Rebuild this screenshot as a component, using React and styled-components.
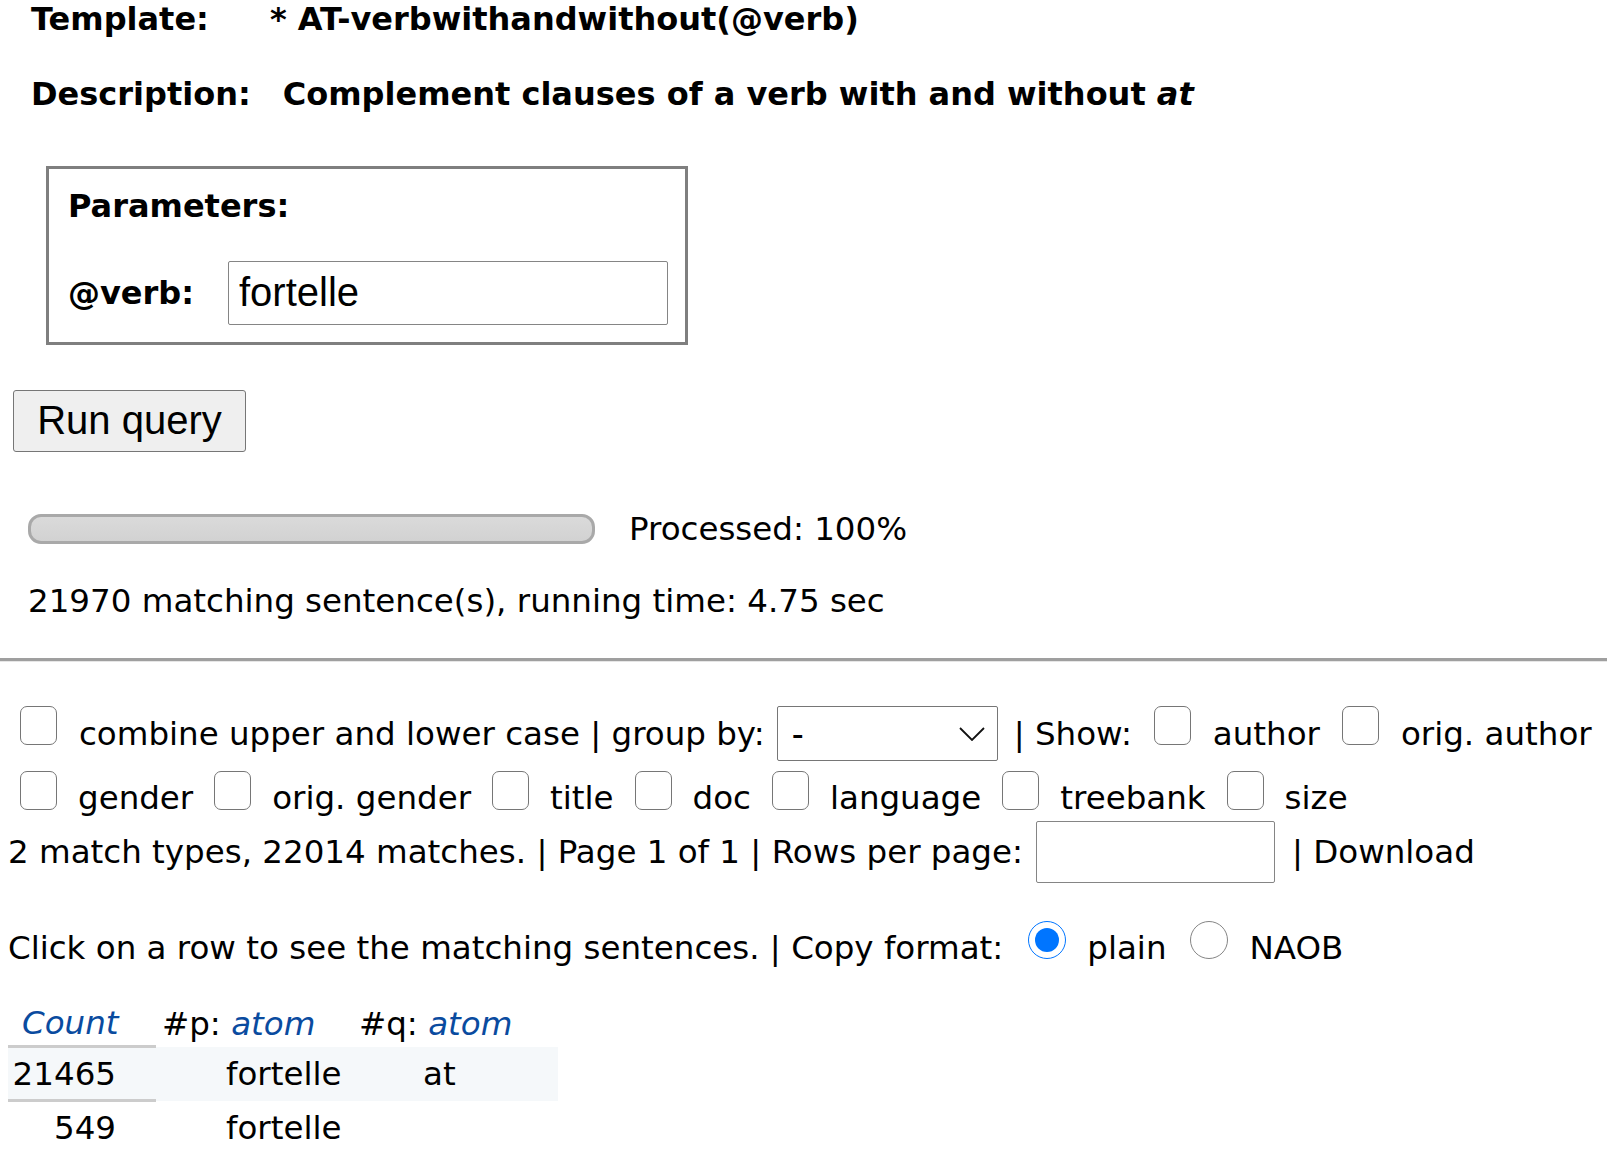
import React from 'react';
import styled, { createGlobalStyle } from 'styled-components';

const GlobalStyle = createGlobalStyle`
  body {
    margin: 0;
    background: #fff;
    color: #000;
    font-family: "DejaVu Sans", Verdana, sans-serif;
    font-size: 32.5px;
  }
`;

const Page = styled.div`
  padding-bottom: 20px;
`;

const InfoRow = styled.div`
  display: flex;
  align-items: center;
  height: 37px;
  padding-left: 31px;
  margin-top: ${props => props.top || 0}px;
  font-size: 32px;
  font-weight: bold;
  white-space: nowrap;
`;

const InfoLabel = styled.span`
  margin-right: ${props => props.gap}px;
`;

const ParamBox = styled.div`
  width: 642px;
  height: 179px;
  box-sizing: border-box;
  margin: 53px 0 0 46px;
  border: 3px solid #7f7f7f;
  padding: 19.5px 17px 0 19px;
`;

const BoxTitle = styled.div`
  height: 37px;
  line-height: 37px;
  font-size: 32px;
  font-weight: bold;
`;

const ParamRow = styled.div`
  display: flex;
  align-items: center;
  margin-top: 35.5px;
`;

const ParamLabel = styled.span`
  width: 160px;
  font-size: 32px;
  font-weight: bold;
`;

const TextInput = styled.input`
  width: ${props => props.w}px;
  height: ${props => props.h}px;
  box-sizing: border-box;
  border: 1px solid #858585;
  border-radius: 2px;
  padding: 0 10px;
  margin: 0;
  font-family: "Liberation Sans", Arial, sans-serif;
  font-size: 40px;
  color: #000;
  background: #fff;
  outline: none;
`;

const RunButton = styled.button`
  display: block;
  width: 233px;
  height: 62px;
  margin: 45px 0 0 13px;
  padding: 0;
  background: #efefef;
  border: 1px solid #767676;
  border-radius: 3px;
  font-family: "Liberation Sans", Arial, sans-serif;
  font-size: 40px;
  color: #000;
`;

const ProgressRow = styled.div`
  display: flex;
  align-items: center;
  gap: 34px;
  height: 37px;
  margin: 58.5px 0 0 28px;
`;

const ProgressBar = styled.div`
  width: 567px;
  height: 30px;
  box-sizing: border-box;
  border: 3px solid #a9a9a9;
  border-radius: 13px;
  background: linear-gradient(#dadada, #d2d2d2);
`;

const Status = styled.div`
  height: 37px;
  line-height: 37px;
  margin: 36px 0 0 28px;
`;

const Divider = styled.div`
  margin-top: 37.5px;
  height: 3px;
  background: #9f9f9f;
  border-bottom: 1px solid #e6e6e6;
`;

const Row = styled.div`
  display: flex;
  align-items: center;
  white-space: nowrap;
  height: ${props => props.h}px;
  margin-top: ${props => props.top}px;
  padding-left: ${props => props.left}px;
`;

const Text = styled.span`
  margin-right: ${props => (props.mr === undefined ? 22 : props.mr)}px;
`;

const Check = styled.span`
  flex: none;
  width: 37px;
  height: 39px;
  box-sizing: border-box;
  border: 1.5px solid #767676;
  border-radius: 7px;
  background: #fff;
  margin: 0 ${props => props.gap || 22}px ${props => props.lift * 2}px 0;
`;

const Radio = styled.span`
  flex: none;
  display: flex;
  align-items: center;
  justify-content: center;
  width: 38px;
  height: 38px;
  box-sizing: border-box;
  border-radius: 50%;
  border: 1.5px solid ${props => (props.checked ? '#0075ff' : '#858585')};
  background: #fff;
  margin: 0 21px 15px 0;

  &::after {
    content: '';
    display: ${props => (props.checked ? 'block' : 'none')};
    width: 24px;
    height: 24px;
    border-radius: 50%;
    background: #0075ff;
  }
`;

const Select = styled.div`
  flex: none;
  display: flex;
  align-items: center;
  justify-content: space-between;
  width: 221px;
  height: 55px;
  box-sizing: border-box;
  border: 1px solid #767676;
  border-radius: 2px;
  padding: 0 12px 0 14px;
  margin: 0 16px 0 -10px;
  font-family: "Liberation Sans", Arial, sans-serif;
  font-size: 36px;
`;

const Table = styled.table`
  border-collapse: collapse;
  margin: 33px 0 0 8px;
`;

const HeadCell = styled.th`
  height: 46px;
  padding: 0 ${props => props.pr || 6}px 0 ${props => props.pl || 6}px;
  width: ${props => props.w}px;
  box-sizing: border-box;
  font-weight: normal;
  text-align: ${props => props.align || 'left'};
  white-space: nowrap;
`;

const Sort = styled.span`
  color: #0a4b9f;
  font-style: italic;
`;

const BodyRow = styled.tr`
  background: ${props => (props.shade ? '#f5f8fa' : 'transparent')};
`;

const CountCell = styled.td`
  height: 51px;
  padding: 0 40px 0 0;
  text-align: right;
  border-top: 3px solid ${props => (props.marked ? '#cccccc' : 'transparent')};
  border-bottom: 3px solid ${props => (props.marked ? '#cccccc' : 'transparent')};
`;

const Cell = styled.td`
  padding: 0 0 0 70px;
  white-space: nowrap;
`;

const Chevron = () => (
  <svg width="26" height="14" viewBox="0 0 26 14">
    <path d="M1 1 L13 13 L25 1" fill="none" stroke="#111" strokeWidth="1.8" />
  </svg>
);

const showFields = ['gender', 'orig. gender', 'title', 'doc', 'language', 'treebank', 'size'];

export default function App() {
  return (
    <Page>
      <GlobalStyle />
      <InfoRow>
        <InfoLabel gap={61}>Template:</InfoLabel>
        <span>* AT-verbwithandwithout(@verb)</span>
      </InfoRow>
      <InfoRow top={38.5}>
        <InfoLabel gap={32}>Description:</InfoLabel>
        <span>
          Complement clauses of a verb with and without <i>at</i>
        </span>
      </InfoRow>

      <ParamBox>
        <BoxTitle>Parameters:</BoxTitle>
        <ParamRow>
          <ParamLabel>@verb:</ParamLabel>
          <TextInput w={440} h={64} defaultValue="fortelle" />
        </ParamRow>
      </ParamBox>

      <RunButton>Run query</RunButton>

      <ProgressRow>
        <ProgressBar />
        <span>Processed: 100%</span>
      </ProgressRow>

      <Status>21970 matching sentence(s), running time: 4.75 sec</Status>

      <Divider />

      <Row h={56} top={44} left={20}>
        <Check lift={8} />
        <Text>combine upper and lower case | group by:</Text>
        <Select>
          <span>-</span>
          <Chevron />
        </Select>
        <Text>| Show:</Text>
        <Check lift={8} />
        <Text>author</Text>
        <Check lift={8} />
        <Text mr={0}>orig. author</Text>
      </Row>

      <Row h={37} top={17.5} left={20}>
        {showFields.map(f => (
          <React.Fragment key={f}>
            <Check lift={7} gap={21} />
            <Text mr={21}>{f}</Text>
          </React.Fragment>
        ))}
      </Row>

      <Row h={62} top={4.5} left={8}>
        <Text mr={13}>2 match types, 22014 matches. | Page 1 of 1 | Rows per page:</Text>
        <TextInput w={239} h={62} />
        <Text mr={0} style={{ marginLeft: 17 }}>| Download</Text>
      </Row>

      <Row h={40} top={45} left={8}>
        <Text mr={25}>Click on a row to see the matching sentences. | Copy format:</Text>
        <Radio checked />
        <Text mr={24}>plain</Text>
        <Radio />
        <Text mr={0}>NAOB</Text>
      </Row>

      <Table>
        <thead>
          <tr>
            <HeadCell w={148} pl={14}>
              <Sort>Count</Sort>
            </HeadCell>
            <HeadCell w={197}>
              #p: <Sort>atom</Sort>
            </HeadCell>
            <HeadCell w={205}>
              #q: <Sort>atom</Sort>
            </HeadCell>
          </tr>
        </thead>
        <tbody>
          <BodyRow shade>
            <CountCell marked>21465</CountCell>
            <Cell>fortelle</Cell>
            <Cell>at</Cell>
          </BodyRow>
          <BodyRow>
            <CountCell>549</CountCell>
            <Cell>fortelle</Cell>
            <Cell />
          </BodyRow>
        </tbody>
      </Table>
    </Page>
  );
}
